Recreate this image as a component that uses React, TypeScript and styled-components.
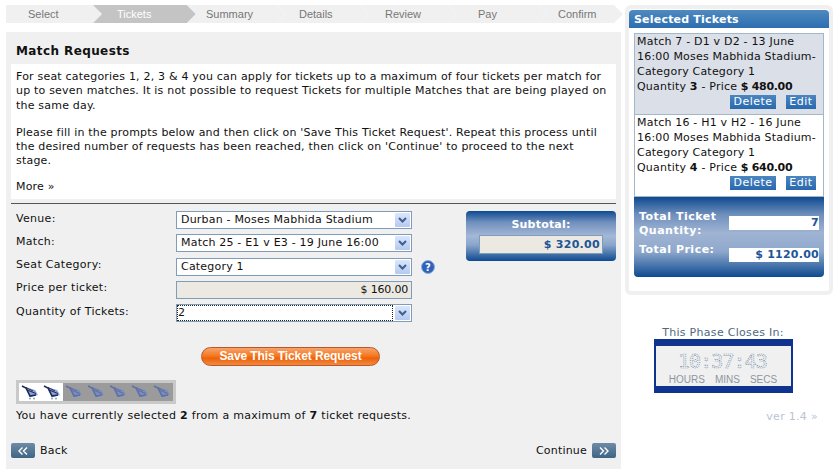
import styled, { createGlobalStyle } from 'styled-components';

const GlobalStyle = createGlobalStyle`
  html, body {
    margin: 0;
    padding: 0;
    background: #fff;
  }
  body {
    font-family: 'DejaVu Sans', Verdana, sans-serif;
    font-size: 11px;
    letter-spacing: 0.3px;
    color: #111;
  }
`;

const Page = styled.div`
  width: 839px;
  height: 469px;
  overflow: hidden;
  box-sizing: border-box;
  padding: 5px 6px 0;
  display: flex;
  gap: 4px;
`;

const MainColumn = styled.div`
  width: 615px;
  display: flex;
  flex-direction: column;
  gap: 9px;
`;

const Steps = styled.div`
  display: flex;
  height: 18px;
`;

const Step = styled.div<{ $active?: boolean; $width: number; $pad: number }>`
  width: ${(p) => p.$width}px;
  flex-shrink: 0;
  margin-right: -9px;
  padding-left: ${(p) => p.$pad}px;
  box-sizing: border-box;
  display: flex;
  align-items: center;
  background: ${(p) => (p.$active ? '#c4c4c4' : '#f0f0f0')};
  color: ${(p) => (p.$active ? '#fff' : '#777')};
  font-family: 'Liberation Sans', Arial, sans-serif;
  font-size: 11px;
  letter-spacing: 0;
  clip-path: polygon(0 0, calc(100% - 9px) 0, 100% 50%, calc(100% - 9px) 100%, 0 100%, 9px 50%);
  &:first-child {
    clip-path: polygon(0 0, calc(100% - 9px) 0, 100% 50%, calc(100% - 9px) 100%, 0 100%);
  }
`;

const Panel = styled.div`
  flex: 1;
  background: #f0f0f0;
  display: flex;
  flex-direction: column;
`;

const Title = styled.h1`
  margin: 0;
  padding: 12px 10px 0;
  height: 20px;
  font-size: 12px;
  font-weight: 700;
  line-height: 14px;
  letter-spacing: 0.4px;
  color: #111;
`;

const Intro = styled.div`
  margin: 0 5px;
  height: 135px;
  box-sizing: border-box;
  padding: 6px 0 0 5px;
  background: #fff;
  line-height: 14.3px;
  letter-spacing: 0.2px;
  white-space: nowrap;
`;

const IntroPara = styled.p`
  margin: 0 0 13px;
  & + & {
    margin-bottom: 11px;
  }
`;

const Rule = styled.div`
  margin: 4px 5px 0;
  height: 1px;
  background: #555;
`;

const FormArea = styled.div`
  margin-top: 7px;
  padding: 0 5px 0 10px;
  display: flex;
  justify-content: space-between;
`;

const Fields = styled.div`
  display: flex;
  flex-direction: column;
  gap: 5.3px;
`;

const FieldRow = styled.div`
  display: grid;
  grid-template-columns: 160px 236px 24px;
  align-items: center;
  height: 18px;
`;

const FieldLabel = styled.label`
  position: relative;
  top: -2px;
`;

const SelectBox = styled.div`
  height: 18px;
  box-sizing: border-box;
  border: 1px solid #7f9db9;
  background: #fff;
  display: flex;
  align-items: center;
  justify-content: space-between;
`;

const SelectValue = styled.span<{ $focused?: boolean }>`
  flex: 1;
  height: 100%;
  box-sizing: border-box;
  line-height: 16px;
  letter-spacing: 0.2px;
  padding-left: ${(p) => (p.$focused ? 1 : 4)}px;
  margin-right: 2px;
  ${(p) => p.$focused && 'outline: 1px dotted #222; outline-offset: -1px;'}
`;

const ArrowButton = styled.span`
  width: 15px;
  height: 14px;
  margin-right: 1px;
  border-radius: 1px;
  background: linear-gradient(#dbe6fb, #b5c9f0);
  display: flex;
  align-items: center;
  justify-content: center;
`;

const ReadOnlyBox = styled.div`
  height: 18px;
  box-sizing: border-box;
  border: 1px solid #7f9db9;
  background: #ebe9e2;
  text-align: right;
  padding-right: 3px;
  line-height: 16px;
  letter-spacing: -0.2px;
`;

const HelpIcon = styled.svg`
  margin-left: 9px;
  display: block;
`;

const SubtotalBox = styled.div`
  width: 150px;
  height: 50px;
  box-sizing: border-box;
  padding: 6px 13px 0;
  border-radius: 4px;
  background: linear-gradient(#0d4a90, #6f8fbc 22%, #a4b8d6 50%, #8aa5cb 68%, #0d4a90);
  text-align: center;
`;

const SubtotalLabel = styled.div`
  color: #fff;
  font-weight: 700;
  line-height: 15px;
  letter-spacing: 0.2px;
  margin-bottom: 3px;
`;

const SubtotalValue = styled.div`
  height: 19px;
  box-sizing: border-box;
  border: 1px solid #7f9db9;
  background: #ebe9e2;
  color: #1c5598;
  font-weight: 700;
  letter-spacing: 0.3px;
  line-height: 17px;
  text-align: right;
  padding-right: 2px;
`;

const SaveRow = styled.div`
  margin-top: 25px;
  padding-left: 195px;
`;

const SaveButton = styled.button`
  display: block;
  width: 179px;
  height: 19px;
  padding: 0 0 1px;
  border: 1px solid #b9572a;
  border-radius: 10px;
  background: linear-gradient(#f7a36d, #f47a22 45%, #ee6208 60%, #f08a42);
  color: #fff;
  font-family: 'Liberation Sans', Arial, sans-serif;
  font-size: 12px;
  font-weight: 700;
  letter-spacing: -0.1px;
  line-height: 15px;
`;

const CartStrip = styled.div`
  margin: 14px 0 0 10px;
  width: 154px;
  padding: 3px;
  background: #c9c9c9;
  display: flex;
`;

const CartCell = styled.div<{ $on: boolean }>`
  width: 22px;
  height: 18px;
  background: ${(p) => (p.$on ? '#fff' : '#9b9b9b')};
  display: flex;
  align-items: center;
  justify-content: center;
`;

const CartIcon = styled.svg<{ $on: boolean }>`
  opacity: ${(p) => (p.$on ? 1 : 0.75)};
  filter: blur(0.3px);
`;

const SelectedNote = styled.p`
  margin: 5px 0 0 10px;
  line-height: 14px;
`;

const BottomNav = styled.div`
  margin-top: 20px;
  padding: 0 5px;
  display: flex;
  justify-content: space-between;
  align-items: center;
`;

const NavLink = styled.div`
  display: flex;
  align-items: center;
  gap: 5px;
  letter-spacing: 0.2px;
`;

const NavButton = styled.span`
  width: 24px;
  height: 15px;
  border-radius: 2px;
  background: linear-gradient(#6d8ba6, #3f6585);
  display: flex;
  align-items: center;
  justify-content: center;
`;

const SideColumn = styled.div`
  width: 208px;
  display: flex;
  flex-direction: column;
  align-items: center;
`;

const SideCard = styled.div`
  width: 208px;
  height: 290px;
  box-sizing: border-box;
  padding: 5px 4px 0;
  background: #fff;
  border-radius: 6px;
  box-shadow: inset 0 0 0 4px #f0f0f0;
`;

const SideHeader = styled.div`
  height: 18px;
  padding-left: 5px;
  border-radius: 4px 4px 0 0;
  background: linear-gradient(#5089c0, #3c7cb8 50%, #2e6eb0);
  color: #fff;
  font-weight: 700;
  line-height: 20px;
  letter-spacing: 0.2px;
`;

const TicketList = styled.div`
  margin: 5px 5px 0;
`;

const TicketCard = styled.div<{ $alt?: boolean }>`
  height: 82px;
  box-sizing: border-box;
  padding: 0 7px 0 2px;
  border: 1px solid #a3b7c8;
  border-top-width: ${(p) => (p.$alt ? 0 : 1)}px;
  background: ${(p) => (p.$alt ? '#fff' : '#dadfe8')};
  line-height: 15px;
  letter-spacing: 0.2px;
  white-space: nowrap;
`;

const TicketPrice = styled.b`
  letter-spacing: -0.3px;
`;

const TicketActions = styled.div`
  display: flex;
  justify-content: flex-end;
  gap: 10px;
  margin-top: 1px;
`;

const SmallButton = styled.span<{ $wide?: boolean }>`
  width: ${(p) => (p.$wide ? 46 : 30)}px;
  height: 14px;
  background: linear-gradient(#4a86c0, #2a68ae);
  color: #fff;
  text-align: center;
  line-height: 13px;
  letter-spacing: 0.5px;
`;

const TotalsBox = styled.div`
  margin: 0 5px;
  height: 80px;
  box-sizing: border-box;
  padding: 13px 5px 0;
  border-radius: 0 0 4px 4px;
  background: linear-gradient(#0d4a90, #6f8fbc 22%, #a0b4d3 45%, #8ea8cc 68%, #0d4a90);
`;

const TotalRow = styled.div<{ $gap: number }>`
  display: grid;
  grid-template-columns: 90px 90px;
  margin-bottom: ${(p) => p.$gap}px;
`;

const TotalLabel = styled.div`
  color: #fff;
  font-weight: 700;
  line-height: 14px;
  letter-spacing: 0.5px;
`;

const TotalValue = styled.div<{ $offset: number }>`
  margin-top: ${(p) => p.$offset}px;
  height: 14px;
  background: #fff;
  color: #1c5598;
  font-weight: 700;
  letter-spacing: 0.25px;
  line-height: 14px;
  text-align: right;
`;

const ClockBlock = styled.div`
  margin: 32px 12px 0 0;
  display: flex;
  flex-direction: column;
  align-items: center;
`;

const ClockTitle = styled.div`
  color: #4f6a80;
  line-height: 12px;
`;

const ClockFrame = styled.div`
  width: 139px;
  height: 54px;
  box-sizing: border-box;
  border: solid #10338f;
  border-width: 7px 2px;
  background: #f0f0f0;
  display: flex;
  flex-direction: column;
  align-items: center;
`;

const ClockDigits = styled.svg`
  display: block;
`;

const ClockLabels = styled.div`
  display: flex;
  gap: 10px;
  font-family: 'Liberation Sans', Arial, sans-serif;
  font-size: 10px;
  letter-spacing: 0;
  color: #8d979f;
  line-height: 13px;
`;

const Version = styled.div`
  align-self: flex-end;
  margin: 17px 15px 0 0;
  color: #b9c4cf;
  line-height: 14px;
`;

function ChevronDown() {
  return (
    <svg width="9" height="6" viewBox="0 0 9 6">
      <path d="M1 1 L4.5 4.5 L8 1" fill="none" stroke="#3f5f8f" strokeWidth="2" />
    </svg>
  );
}

function DoubleChevron({ dir }: { dir: 'left' | 'right' }) {
  return (
    <svg width="10" height="8" viewBox="0 0 10 8">
      <path
        d={dir === 'left' ? 'M4.5 0.5 L1 4 L4.5 7.5 M9 0.5 L5.5 4 L9 7.5' : 'M1 0.5 L4.5 4 L1 7.5 M5.5 0.5 L9 4 L5.5 7.5'}
        fill="none"
        stroke="#fff"
        strokeWidth="1.4"
      />
    </svg>
  );
}

function Cart({ on }: { on: boolean }) {
  const dark = on ? '#1c2c55' : '#4a62a8';
  return (
    <CartIcon $on={on} width="18" height="16" viewBox="0 0 18 16">
      <path d="M4 3 L14 6 L17 11 L9 13 Z" fill={on ? '#8d9fd8' : '#7186c8'} />
      <path d="M1 2 L5 4 L9 12 L15 11" fill="none" stroke={dark} strokeWidth="1.6" />
      <path d="M6 6 L15 9.5 M5 3.5 L12 7" stroke={dark} strokeWidth="1" />
      <circle cx="9" cy="14.5" r="1" fill="#7fa7b8" />
      <circle cx="13" cy="14.5" r="1" fill="#7fa7b8" />
    </CartIcon>
  );
}

function Dropdown({ value, focused }: { value: string; focused?: boolean }) {
  return (
    <SelectBox>
      <SelectValue $focused={focused}>{value}</SelectValue>
      <ArrowButton>
        <ChevronDown />
      </ArrowButton>
    </SelectBox>
  );
}

const steps = [
  { name: 'Select', width: 96, pad: 22 },
  { name: 'Tickets', width: 103, pad: 24, active: true },
  { name: 'Summary', width: 99, pad: 19 },
  { name: 'Details', width: 92, pad: 22 },
  { name: 'Review', width: 97, pad: 25 },
  { name: 'Pay', width: 99, pad: 30 },
  { name: 'Confirm', width: 85, pad: 20 },
];

const tickets = [
  { line1: 'Match 7 - D1 v D2 - 13 June', qty: 3, price: '$ 480.00' },
  { line1: 'Match 16 - H1 v H2 - 16 June', qty: 4, price: '$ 640.00', alt: true },
];

function App() {
  return (
    <>
      <GlobalStyle />
      <Page>
        <MainColumn>
          <Steps>
            {steps.map((step) => (
              <Step key={step.name} $active={step.active} $width={step.width} $pad={step.pad}>
                {step.name}
              </Step>
            ))}
          </Steps>
          <Panel>
            <Title>Match Requests</Title>
            <Intro>
              <IntroPara>
                For seat categories 1, 2, 3 &amp; 4 you can apply for tickets up to a maximum of four tickets per match for
                <br />
                up to seven matches. It is not possible to request Tickets for multiple Matches that are being played on
                <br />
                the same day.
              </IntroPara>
              <IntroPara>
                Please fill in the prompts below and then click on 'Save This Ticket Request'. Repeat this process until
                <br />
                the desired number of requests has been reached, then click on 'Continue' to proceed to the next
                <br />
                stage.
              </IntroPara>
              <div>More »</div>
            </Intro>
            <Rule />
            <FormArea>
              <Fields>
                <FieldRow>
                  <FieldLabel>Venue:</FieldLabel>
                  <Dropdown value="Durban - Moses Mabhida Stadium" />
                </FieldRow>
                <FieldRow>
                  <FieldLabel>Match:</FieldLabel>
                  <Dropdown value="Match 25 - E1 v E3 - 19 June 16:00" />
                </FieldRow>
                <FieldRow>
                  <FieldLabel>Seat Category:</FieldLabel>
                  <Dropdown value="Category 1" />
                  <HelpIcon width="14" height="14" viewBox="0 0 14 14">
                    <circle cx="7" cy="7" r="6.5" fill="#2f62b8" stroke="#8fb0e0" />
                    <text x="7" y="10.5" textAnchor="middle" fontSize="10" fontWeight="700" fill="#fff">
                      ?
                    </text>
                  </HelpIcon>
                </FieldRow>
                <FieldRow>
                  <FieldLabel>Price per ticket:</FieldLabel>
                  <ReadOnlyBox>$ 160.00</ReadOnlyBox>
                </FieldRow>
                <FieldRow>
                  <FieldLabel>Quantity of Tickets:</FieldLabel>
                  <Dropdown value="2" focused />
                </FieldRow>
              </Fields>
              <SubtotalBox>
                <SubtotalLabel>Subtotal:</SubtotalLabel>
                <SubtotalValue>$ 320.00</SubtotalValue>
              </SubtotalBox>
            </FormArea>
            <SaveRow>
              <SaveButton type="button">Save This Ticket Request</SaveButton>
            </SaveRow>
            <CartStrip>
              {[0, 1, 2, 3, 4, 5, 6].map((i) => (
                <CartCell key={i} $on={i < 2}>
                  <Cart on={i < 2} />
                </CartCell>
              ))}
            </CartStrip>
            <SelectedNote>
              You have currently selected <b>2</b> from a maximum of <b>7</b> ticket requests.
            </SelectedNote>
            <BottomNav>
              <NavLink>
                <NavButton>
                  <DoubleChevron dir="left" />
                </NavButton>
                Back
              </NavLink>
              <NavLink>
                Continue
                <NavButton>
                  <DoubleChevron dir="right" />
                </NavButton>
              </NavLink>
            </BottomNav>
          </Panel>
        </MainColumn>
        <SideColumn>
          <SideCard>
            <SideHeader>Selected Tickets</SideHeader>
            <TicketList>
              {tickets.map((ticket) => (
                <TicketCard key={ticket.line1} $alt={ticket.alt}>
                  {ticket.line1}
                  <br />
                  16:00 Moses Mabhida Stadium-
                  <br />
                  Category Category 1
                  <br />
                  Quantity <b>{ticket.qty}</b> - Price <TicketPrice>{ticket.price}</TicketPrice>
                  <TicketActions>
                    <SmallButton $wide>Delete</SmallButton>
                    <SmallButton>Edit</SmallButton>
                  </TicketActions>
                </TicketCard>
              ))}
            </TicketList>
            <TotalsBox>
              <TotalRow $gap={5}>
                <TotalLabel>
                  Total Ticket
                  <br />
                  Quantity:
                </TotalLabel>
                <TotalValue $offset={6}>7</TotalValue>
              </TotalRow>
              <TotalRow $gap={0}>
                <TotalLabel>Total Price:</TotalLabel>
                <TotalValue $offset={5}>$ 1120.00</TotalValue>
              </TotalRow>
            </TotalsBox>
          </SideCard>
          <ClockBlock>
            <ClockTitle>This Phase Closes In:</ClockTitle>
            <ClockFrame>
              <ClockDigits width="100" height="27" viewBox="0 0 100 27">
                <text
                  x="50"
                  y="22"
                  textAnchor="middle"
                  fontFamily="'DejaVu Sans Mono', monospace"
                  fontSize="20"
                  textLength="90"
                  fill="none"
                  stroke="#5f7f9c"
                  strokeWidth="0.7"
                  strokeDasharray="1 1"
                >
                  10:37:43
                </text>
              </ClockDigits>
              <ClockLabels>
                <span>HOURS</span>
                <span>MINS</span>
                <span>SECS</span>
              </ClockLabels>
            </ClockFrame>
          </ClockBlock>
          <Version>ver 1.4 »</Version>
        </SideColumn>
      </Page>
    </>
  );
}

export default App;
